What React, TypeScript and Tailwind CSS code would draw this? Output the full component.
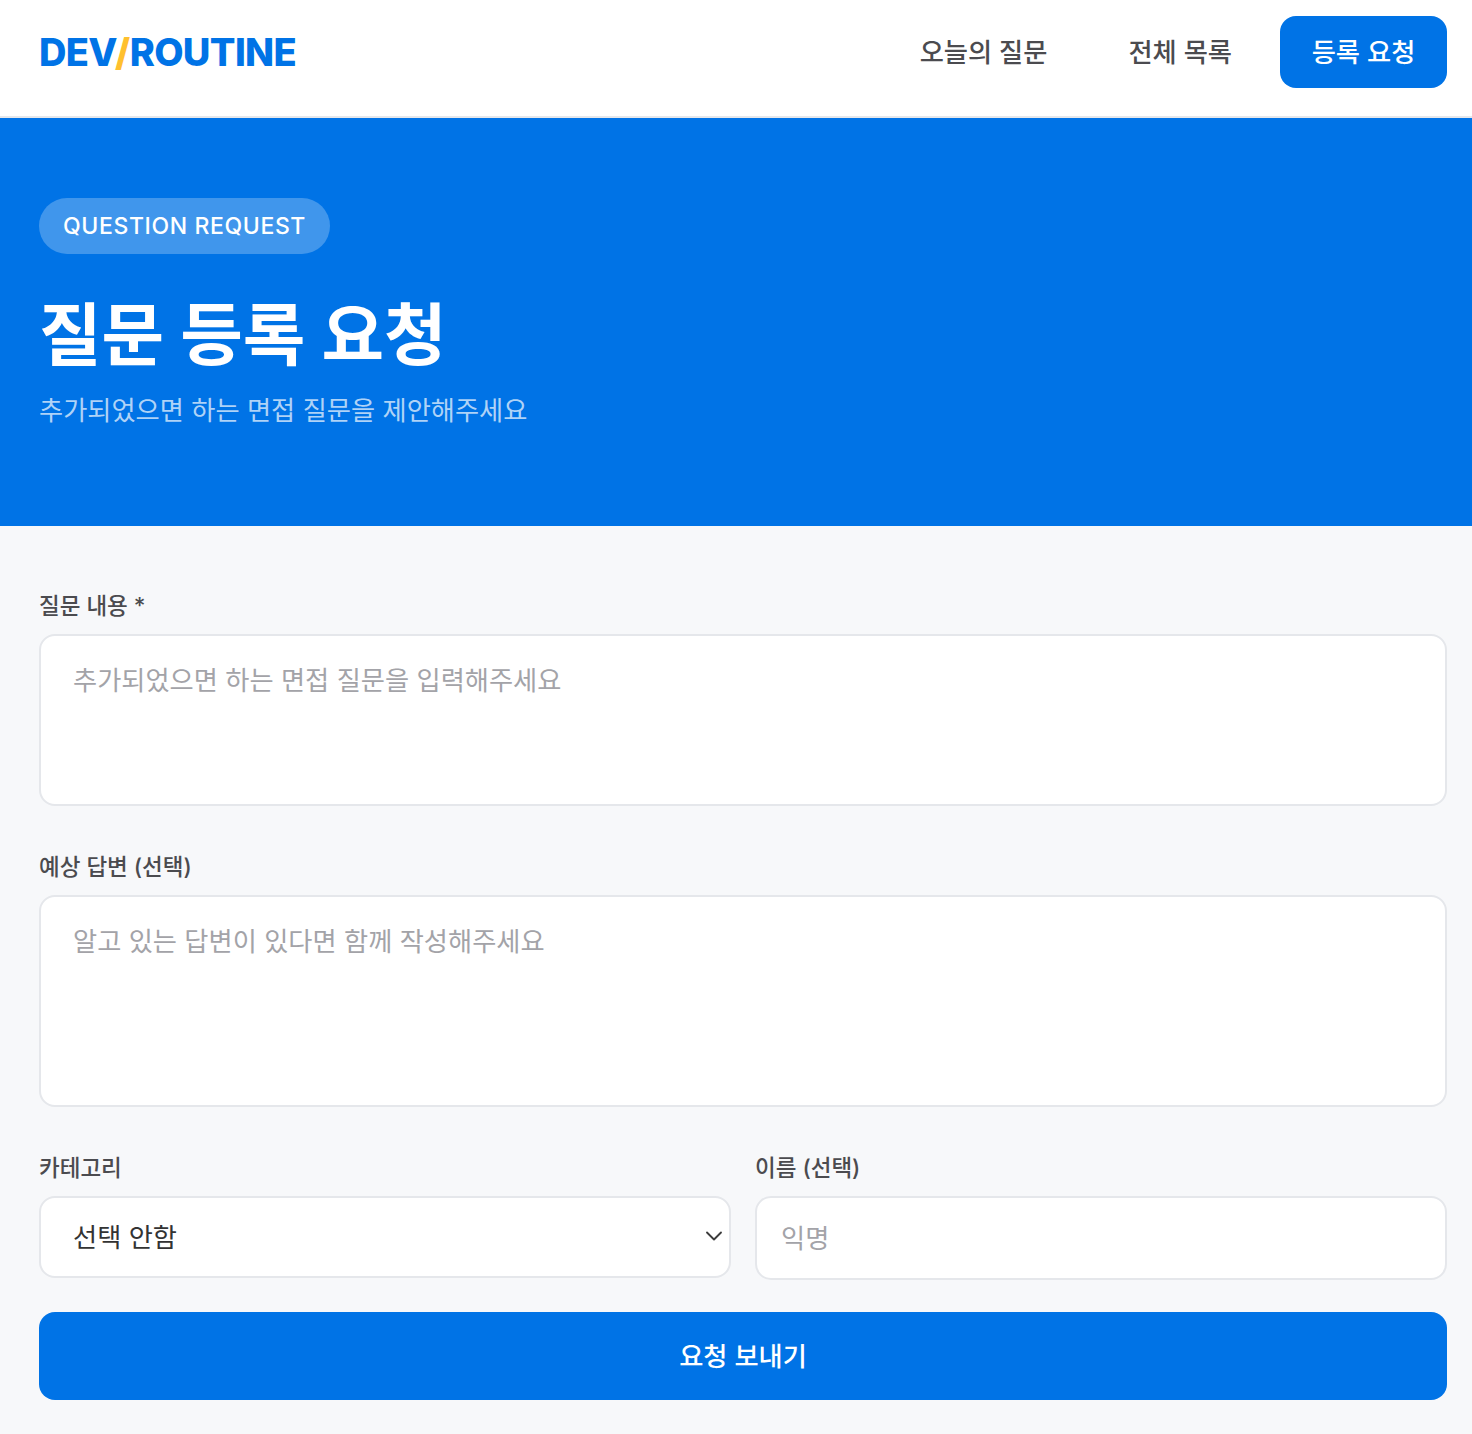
import { ChevronDown } from "lucide-react";

const FONT = "font-['Inter','Noto_Sans_CJK_KR',sans-serif]";

function Label({ children }: { children: React.ReactNode }) {
  return <label className="block text-[22.5px] leading-[33px] font-medium text-[#4b4b4f]">{children}</label>;
}

const fieldClass =
  "block w-full rounded-[16px] border-2 border-[#e5e7eb] bg-white text-[26.25px] text-[#333] placeholder:text-[#a3a3a8] outline-none";

export default function App() {
  return (
    <div className={`${FONT} min-h-[1434px] bg-[#f7f8fa]`}>
      <header className="flex h-[118px] items-center justify-between border-b-2 border-[#e5e7eb] bg-white pb-[12px] pl-[39px] pr-[25px]">
        <div className="text-[38px] font-extrabold tracking-[-0.65px] text-[#0073e6]">
          DEV<span className="text-[#ffc02e]">/</span>ROUTINE
        </div>
        <nav className="flex items-center">
          <a className="mr-[81px] pt-[2px] text-[26.25px] font-medium text-[#4b4b4f]">오늘의 질문</a>
          <a className="mr-[48px] pt-[2px] text-[26.25px] font-medium text-[#4b4b4f]">전체 목록</a>
          <a className="flex h-[72px] w-[167px] items-center justify-center rounded-[16px] bg-[#0073e6] pt-[2px] text-[26.25px] font-medium text-white">
            등록 요청
          </a>
        </nav>
      </header>

      <section className="h-[408px] bg-[#0073e6] pl-[39px] pt-[80px]">
        <span className="inline-flex h-[56px] items-center rounded-full bg-white/25 px-[24px] text-[23px] font-medium tracking-[0.62px] text-white">
          QUESTION REQUEST
        </span>
        <h1 className="mt-[37px] text-[68px] leading-[88px] font-bold text-white">질문 등록 요청</h1>
        <p className="mt-[14px] text-[26.25px] leading-[36px] text-white/70">추가되었으면 하는 면접 질문을 제안해주세요</p>
      </section>

      <main className="pl-[39px] pr-[25px] pt-[63px]">
        <Label>질문 내용 *</Label>
        <textarea
          className={`${fieldClass} mt-[12px] h-[172px] resize-none px-[32px] pb-[26px] pt-[25px]`}
          placeholder="추가되었으면 하는 면접 질문을 입력해주세요"
        />
        <div className="mt-[44px]">
          <Label>예상 답변 (선택)</Label>
        </div>
        <textarea
          className={`${fieldClass} mt-[12px] h-[212px] resize-none px-[32px] pb-[26px] pt-[25px]`}
          placeholder="알고 있는 답변이 있다면 함께 작성해주세요"
        />
        <div className="mt-[44px] grid grid-cols-2 gap-[24px]">
          <div>
            <Label>카테고리</Label>
            <div className="relative mt-[12px]">
              <select className={`${fieldClass} h-[82px] appearance-none px-[32px] pt-[2px]`}>
                <option>선택 안함</option>
              </select>
              <ChevronDown className="absolute right-[3px] top-[26px] h-[28px] w-[28px] text-[#3c3c3c]" strokeWidth={1.6} />
            </div>
          </div>
          <div>
            <Label>이름 (선택)</Label>
            <input className={`${fieldClass} mt-[12px] h-[84px] px-[24px]`} placeholder="익명" />
          </div>
        </div>
        <button className="mt-[32px] mb-[34px] h-[88px] w-full rounded-[16px] bg-[#0073e6] pt-[2px] text-[26.25px] font-medium text-white">
          요청 보내기
        </button>
      </main>
    </div>
  );
}
